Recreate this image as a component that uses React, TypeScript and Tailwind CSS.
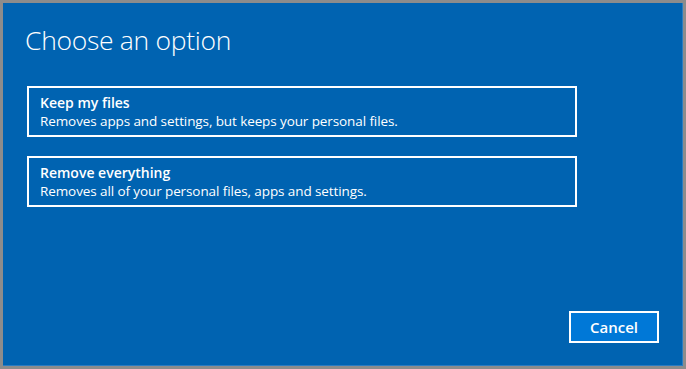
import React from 'react';

const options = [
  { title: 'Keep my files', desc: 'Removes apps and settings, but keeps your personal files.' },
  { title: 'Remove everything', desc: 'Removes all of your personal files, apps and settings.' },
];

export default function App() {
  return (
    <div
      className="h-[369px] w-[686px] bg-[#8c8c8c] p-[3px] overflow-hidden"
      style={{ fontFamily: '"Open Sans", "Noto Sans", sans-serif' }}
    >
      <div className="flex h-full flex-col bg-[#0063b1] border-r border-b border-[#2a7cc2] pl-[24px] pr-[23px] pt-[20px] pb-[22px] text-white">
        <h1 className="ml-[-2px] text-[26.5px] font-light leading-[34px] tracking-[-0.3px]">Choose an option</h1>

        {/* Options */}
        <div className="mt-[29px] flex flex-col gap-[19px]">
          {options.map((o) => (
            <button
              key={o.title}
              className="flex h-[51px] w-[550px] flex-col justify-center border-2 border-white px-[11px] text-left"
            >
              <span className="text-[14px] font-semibold leading-[19px]">{o.title}</span>
              <span className="text-[13.5px] leading-[19px] tracking-[-0.1px]">{o.desc}</span>
            </button>
          ))}
        </div>

        <div className="flex-1" />

        {/* Footer */}
        <div className="flex justify-end">
          <button className="h-[32px] w-[90px] border-2 border-white bg-[#0078d7] text-[15px] font-semibold leading-none">
            Cancel
          </button>
        </div>
      </div>
    </div>
  );
}
